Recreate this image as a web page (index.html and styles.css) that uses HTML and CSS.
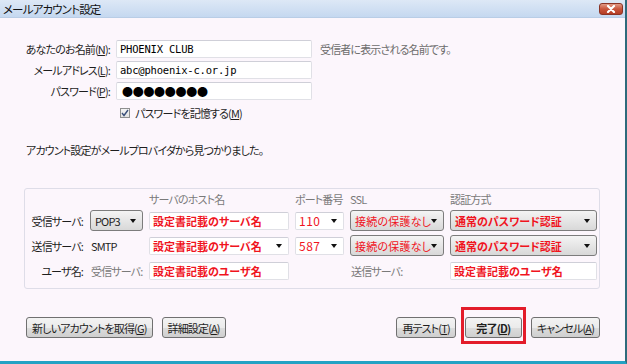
FILE: index.html
```html
<html>
	<head>
		<title>メールアカウント設定</title>
		<link rel="stylesheet" href="styles.css">
	</head>
	<body>
		<div class="window">
			<div class="titlebar">
				<span class="title">メールアカウント設定</span>
				<span class="close">
					<svg width="10" height="8" viewBox="0 0 10 8"><path d="M2 1 L8 7 M8 1 L2 7" stroke="#fff" stroke-width="2.2" stroke-linecap="round"/></svg>
				</span>
			</div>

			<div class="content">
				<div class="ident">
					<label>あなたのお名前(<u>N</u>):</label>
					<div class="field mono">PHOENIX CLUB</div>
					<span class="hint">受信者に表示される名前です。</span>

					<label>メールアドレス(<u>L</u>):</label>
					<div class="field mono">abc@phoenix-c.or.jp</div>
					<span></span>

					<label>パスワード(<u>P</u>):</label>
					<div class="field dots">●●●●●●●●</div>
					<span></span>

					<span></span>
					<div class="remember">
						<span class="check">
							<svg width="8" height="8" viewBox="0 0 8 8"><path d="M1 4 L3 6.5 L7 1" fill="none" stroke="#3a4f7a" stroke-width="1.4"/></svg>
						</span>
						<span>パスワードを記憶する(<u>M</u>)</span>
					</div>
				</div>

				<p class="found">アカウント設定がメールプロバイダから見つかりました。</p>

				<div class="servers">
					<span></span>
					<span></span>
					<span class="head">サーバのホスト名</span>
					<span class="head">ポート番号</span>
					<span class="head">SSL</span>
					<span class="head">認証方式</span>

					<label>受信サーバ:</label>
					<div class="select"><span>POP3</span><i class="arrow"></i></div>
					<div class="field red">設定書記載のサーバ名</div>
					<div class="field combo red num"><span>110</span><i class="arrow"></i></div>
					<div class="select red thin"><span>接続の保護なし</span><i class="arrow"></i></div>
					<div class="select red"><span>通常のパスワード認証</span><i class="arrow"></i></div>

					<label>送信サーバ:</label>
					<span class="plain">SMTP</span>
					<div class="field combo red"><span>設定書記載のサーバ名</span><i class="arrow"></i></div>
					<div class="field combo red num"><span>587</span><i class="arrow"></i></div>
					<div class="select red thin"><span>接続の保護なし</span><i class="arrow"></i></div>
					<div class="select red"><span>通常のパスワード認証</span><i class="arrow"></i></div>

					<label>ユーザ名:</label>
					<span class="plain muted">受信サーバ:</span>
					<div class="field red">設定書記載のユーザ名</div>
					<span></span>
					<span class="plain muted">送信サーバ:</span>
					<div class="field red">設定書記載のユーザ名</div>
				</div>

				<div class="actions">
					<div class="group">
						<span class="btn">新しいアカウントを取得(<u>G</u>)</span>
						<span class="btn">詳細設定(<u>A</u>)</span>
					</div>
					<div class="group">
						<span class="btn">再テスト(<u>T</u>)</span>
						<span class="marked"><span class="btn done">完了(<u>D</u>)</span></span>
						<span class="btn">キャンセル(<u>A</u>)</span>
					</div>
				</div>
			</div>
		</div>
	</body>
</html>
```

FILE: styles.css
```css
body{
	margin:0px;
	background-color:#fcf6fc;
	font-family:"Noto Sans CJK JP", sans-serif;
	font-size:11px;
	letter-spacing:-0.85px;
	font-feature-settings:"palt";
	color:#1e1e1e;
	white-space:nowrap;
}
u{
	text-decoration:underline;
	text-underline-offset:1px;
}
.window{
	width:627px;
	height:364px;
	box-sizing:border-box;
	display:flex;
	flex-direction:column;
	background-color:#fcf6fc;
	border-right:2px solid #2d6b7c;
	border-bottom:3px solid #23a2c4;
}
.titlebar{
	height:17px;
	display:flex;
	align-items:center;
	justify-content:space-between;
	padding:0 2px 0 3px;
	background:linear-gradient(#dde8f6, #c5d8f0);
	border-bottom:1px solid #b9cde6;
}
.title{
	font-size:11.5px;
	color:#111;
}
.close{
	width:24px;
	height:12px;
	display:flex;
	align-items:center;
	justify-content:center;
	box-sizing:border-box;
	border:1px solid #8a3325;
	border-radius:3px;
	background:linear-gradient(#e19a86, #c9553c 50%, #b43c24);
}
.content{
	flex:1;
	padding:22px 25px 0 24px;
}

/* identity block */
.ident{
	display:grid;
	grid-template-columns:86px 196px 1fr;
	grid-auto-rows:18px;
	column-gap:6px;
	row-gap:3px;
	align-items:center;
}
.ident label{
	text-align:right;
}
.hint{
	color:#6d6d6d;
	padding-left:2px;
}
.field{
	height:18px;
	box-sizing:border-box;
	background:#fff;
	border:1px solid #e0e0e6;
	border-top-color:#cfcfd8;
	border-radius:2px;
	padding:0 3px;
	display:flex;
	align-items:center;
	overflow:hidden;
}
.mono{
	font-family:"DejaVu Sans Mono", monospace;
	font-size:10.5px;
	letter-spacing:-0.2px;
	color:#000;
}
.dots{
	font-size:11px;
	letter-spacing:-0.3px;
	color:#000;
	padding-left:5px;
}
.remember{
	grid-column:2 / 4;
	display:flex;
	align-items:center;
	gap:5px;
	padding-left:4px;
	padding-top:2px;
}
.check{
	width:10px;
	height:10px;
	box-sizing:border-box;
	border:1px solid #8e8f8f;
	background:linear-gradient(#f4f4f4, #e2e2e2);
	display:flex;
	align-items:center;
	justify-content:center;
}
.found{
	margin:21px 0 0 2px;
	line-height:16px;
}

/* server table */
.servers{
	margin-top:30px;
	border:1px solid #dedde8;
	border-radius:3px;
	padding:1px 0 7px 1px;
	display:grid;
	grid-template-columns:58px 53px 140px 49px 94px 147px;
	grid-template-rows:16px 21px 21px 21px;
	column-gap:6px;
	row-gap:4px;
	align-items:center;
}
.servers label{
	text-align:right;
	padding-right:1px;
}
.head{
	color:#7a7a7a;
	margin-top:1px;
}
.plain{
	padding-left:1px;
}
.muted{
	color:#7a7a7a;
}
.red{
	color:#f0141e;
	font-weight:bold;
	font-size:11px;
	letter-spacing:0;
}
.red.thin{
	font-weight:normal;
	letter-spacing:0.2px;
}
.red.num{
	font-weight:normal;
	font-size:12px;
	letter-spacing:0.5px;
}
.select{
	height:21px;
	box-sizing:border-box;
	border:1px solid #7c7c7c;
	border-radius:3px;
	background:linear-gradient(#f4f4f4, #e6e6e6 50%, #d8d8d8);
	display:flex;
	align-items:center;
	justify-content:space-between;
	padding:0 6px 0 4px;
}
.combo{
	justify-content:space-between;
	padding-right:6px;
}
.arrow{
	width:0;
	height:0;
	border-left:3.5px solid transparent;
	border-right:3.5px solid transparent;
	border-top:4px solid #111;
}

/* bottom buttons */
.actions{
	margin-top:28px;
	padding-left:2px;
	display:flex;
	justify-content:space-between;
}
.group{
	display:flex;
	gap:9px;
	align-items:center;
}
.btn{
	height:21px;
	box-sizing:border-box;
	padding:0 5px;
	display:flex;
	align-items:center;
	border:1px solid #707070;
	border-radius:3px;
	background:linear-gradient(#f3f3f3, #ebebeb 50%, #dddddd 51%, #cfcfcf);
}
.done{
	width:57px;
	justify-content:center;
	font-weight:bold;
}
.marked{
	position:relative;
	display:flex;
}
.marked::after{
	content:"";
	position:absolute;
	top:-10px;
	bottom:-6px;
	left:-4px;
	right:-4px;
	border:3px solid #e31c2a;
}
```
